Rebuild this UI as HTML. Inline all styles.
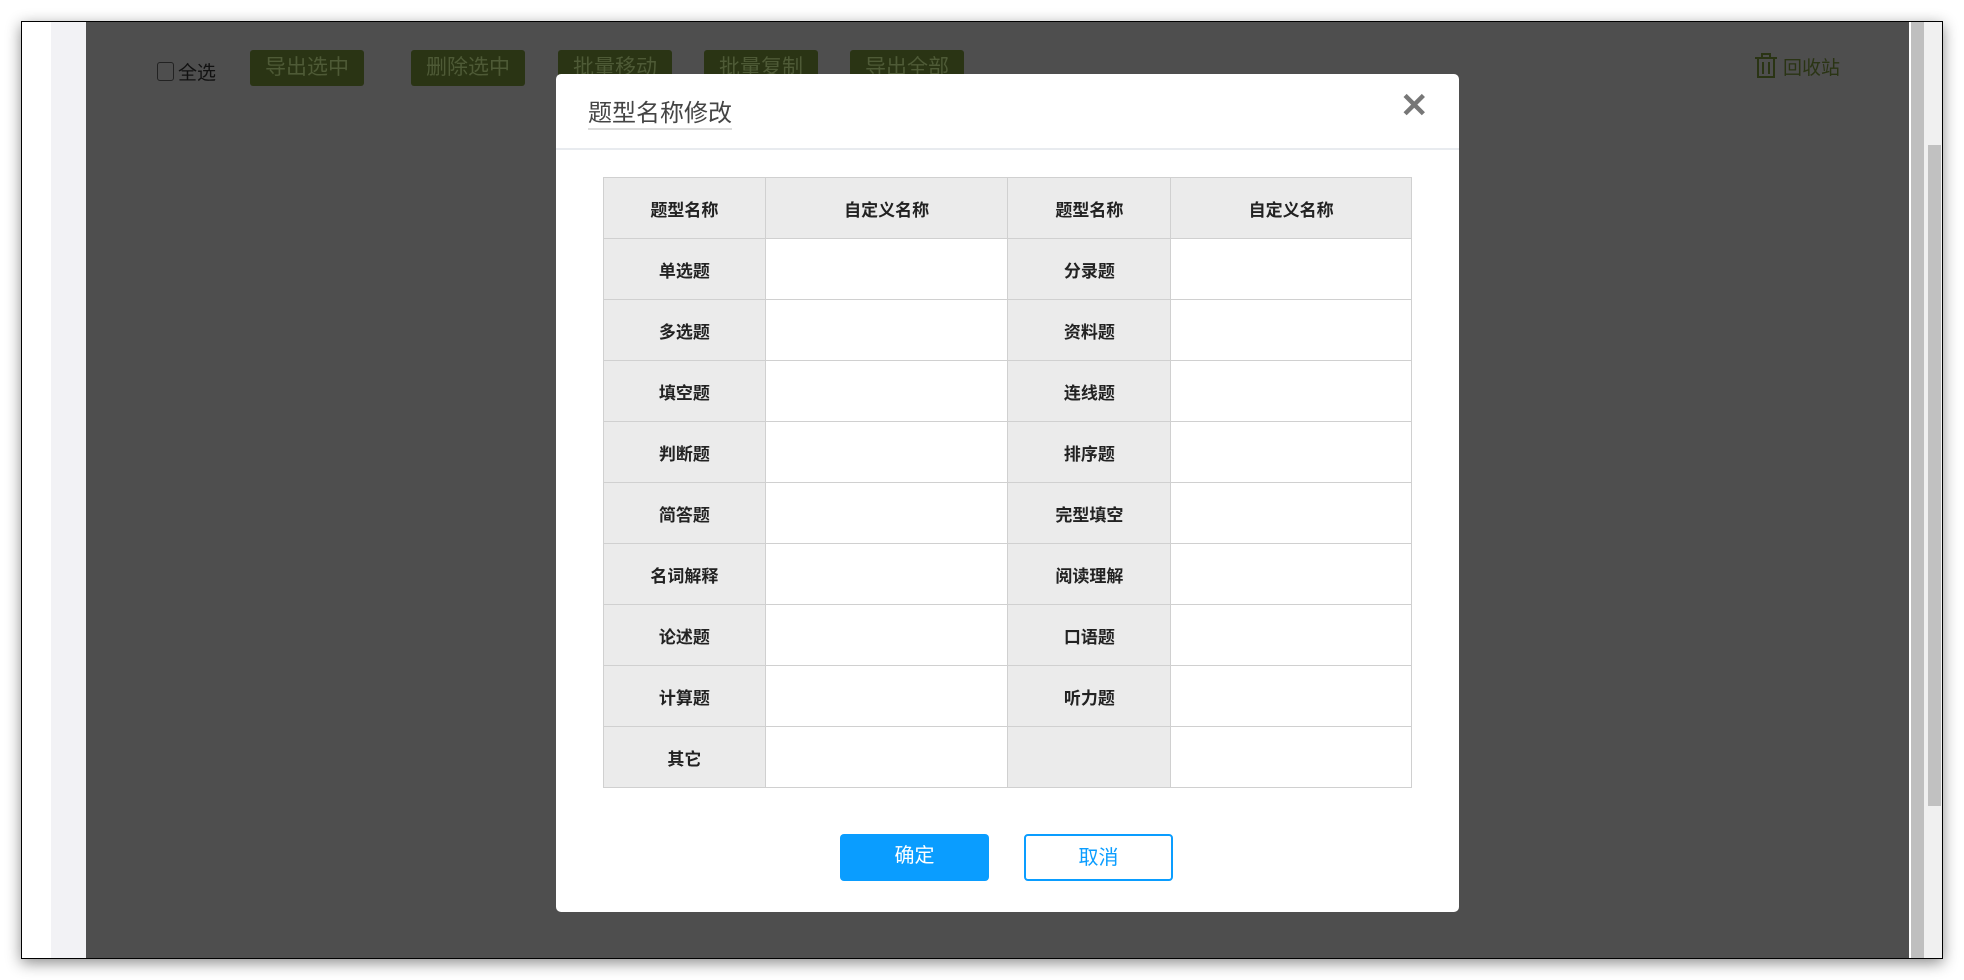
<!DOCTYPE html>
<html><head><meta charset="utf-8"><style>
*{margin:0;padding:0;box-sizing:border-box}
body{width:1964px;height:980px;background:#fff;position:relative;overflow:hidden;font-family:"Liberation Sans","Noto Sans CJK SC",sans-serif}
.frame{position:absolute;left:21px;top:21px;width:1922px;height:938px;border:1px solid #000;box-shadow:0 4px 14px rgba(0,0,0,.45);background:#4e4e4e;overflow:hidden}
.ab{position:absolute}
.tb{position:absolute;top:28px;height:36px;background:#2a3414;color:#4e5a36;font-size:21px;line-height:36px;text-align:center;border-radius:3px;width:114px}
.modal{position:absolute;left:534px;top:52px;width:903px;height:838px;background:#fff;border-radius:5px}
table{position:absolute;left:47px;top:103px;border-collapse:collapse;width:809px}
td{border:1px solid #d0d0d0;height:61px;text-align:center;font-size:17px;font-weight:bold;color:#222}
td.g{background:#ebebeb}
.btn{position:absolute;top:760px;width:149px;height:47px;border-radius:4px;font-size:20px;line-height:45px;text-align:center}
</style></head><body>
<div class="frame">
 <div class="ab" style="left:0;top:0;width:29px;height:938px;background:#fff"></div>
 <div class="ab" style="left:29px;top:0;width:35px;height:938px;background:#f2f2f5"></div>
 <div class="ab" style="left:1887px;top:0;width:2px;height:938px;background:#fff"></div>
 <div class="ab" style="left:1889px;top:0;width:13px;height:938px;background:#bfbfbf"></div>
 <div class="ab" style="left:1902px;top:0;width:20px;height:938px;background:#f0f0f0"></div>
 <div class="ab" style="left:1906px;top:123px;width:13px;height:661px;background:#c1c1c1"></div>
 <div class="ab" style="left:135px;top:40px;width:17px;height:19px;border:1px solid #222;border-radius:3px"></div>
 <div class="ab" style="left:156px;top:36px;font-size:19px;color:#111">全选</div>
 <div class="tb" style="left:228px">导出选中</div>
 <div class="tb" style="left:389px">删除选中</div>
 <div class="tb" style="left:536px">批量移动</div>
 <div class="tb" style="left:682px">批量复制</div>
 <div class="tb" style="left:828px">导出全部</div>
 <svg class="ab" style="left:1732px;top:30px" width="24" height="26" viewBox="0 0 24 26"><g fill="none" stroke="#2a3414" stroke-width="2"><path d="M1 6h22M8 6V2h8v4M4 6v19h16V6M9 10v12M15 10v12"/></g></svg>
 <div class="ab" style="left:1761px;top:31px;font-size:19px;color:#2a3414">回收站</div>
 <div class="modal">
  <div class="ab" style="left:32px;top:25px;font-size:24px;color:#444;border-bottom:2px solid #ddd;line-height:29px">题型名称修改</div>
  <div class="ab" style="left:844px;top:12px;font-size:34px;font-weight:bold;color:#777">✕</div>
  <div class="ab" style="left:0;top:74px;width:903px;height:2px;background:#e8ebef"></div>
  <table>
   <colgroup><col style="width:162px"><col style="width:243px"><col style="width:163px"><col style="width:241px"></colgroup>
   <tr><td class="g">题型名称</td><td class="g">自定义名称</td><td class="g">题型名称</td><td class="g">自定义名称</td></tr>
   <tr><td class="g">单选题</td><td></td><td class="g">分录题</td><td></td></tr>
   <tr><td class="g">多选题</td><td></td><td class="g">资料题</td><td></td></tr>
   <tr><td class="g">填空题</td><td></td><td class="g">连线题</td><td></td></tr>
   <tr><td class="g">判断题</td><td></td><td class="g">排序题</td><td></td></tr>
   <tr><td class="g">简答题</td><td></td><td class="g">完型填空</td><td></td></tr>
   <tr><td class="g">名词解释</td><td></td><td class="g">阅读理解</td><td></td></tr>
   <tr><td class="g">论述题</td><td></td><td class="g">口语题</td><td></td></tr>
   <tr><td class="g">计算题</td><td></td><td class="g">听力题</td><td></td></tr>
   <tr><td class="g">其它</td><td></td><td class="g"></td><td></td></tr>
  </table>
  <div class="btn" style="left:284px;background:#0a9dff;color:#fff">确定</div>
  <div class="btn" style="left:468px;border:2px solid #0a9dff;color:#0a9dff">取消</div>
 </div>
</div>
</body></html>
